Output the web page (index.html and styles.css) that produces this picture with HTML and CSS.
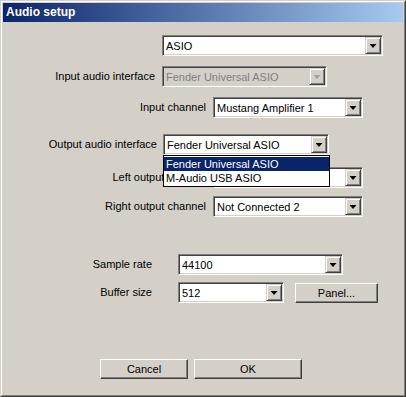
FILE: index.html
```html
<!DOCTYPE html>
<html lang="en">
<head>
    <meta charset="UTF-8">
    <title>Audio setup</title>
    <link rel="stylesheet" href="styles.css">
</head>
<body>

    <div id="window">
        <div id="frame">

            <div id="titlebar">Audio setup</div>

            <div id="content">

                <div class="row row-driver">
                    <div class="combo combo-driver"><span class="value">ASIO</span><span class="arrow"></span></div>
                </div>

                <div class="row row-input-if">
                    <label class="label label-mid">Input audio interface</label>
                    <div class="combo combo-mid disabled"><span class="value">Fender Universal ASIO</span><span class="arrow"></span></div>
                </div>

                <div class="row row-input-ch">
                    <label class="label label-wide">Input channel</label>
                    <div class="combo combo-channel"><span class="value">Mustang Amplifier 1</span><span class="arrow"></span></div>
                </div>

                <div class="row row-output-if">
                    <label class="label label-output">Output audio interface</label>
                    <div class="combo combo-output open">
                        <span class="value">Fender Universal ASIO</span><span class="arrow"></span>
                        <!-- open drop-down list -->
                        <ul class="dropdown">
                            <li class="selected">Fender Universal ASIO</li>
                            <li>M-Audio USB ASIO</li>
                        </ul>
                    </div>
                </div>

                <div class="row row-left">
                    <label class="label label-wide">Left output channel</label>
                    <!-- value is hidden behind the open list -->
                    <div class="combo combo-channel"><span class="value"></span><span class="arrow"></span></div>
                </div>

                <div class="row row-right">
                    <label class="label label-wide">Right output channel</label>
                    <div class="combo combo-channel"><span class="value">Not Connected 2</span><span class="arrow"></span></div>
                </div>

                <div class="row row-rate">
                    <label class="label label-narrow">Sample rate</label>
                    <div class="combo combo-rate"><span class="value">44100</span><span class="arrow"></span></div>
                </div>

                <div class="row row-buffer">
                    <label class="label label-narrow">Buffer size</label>
                    <div class="combo combo-buffer"><span class="value">512</span><span class="arrow"></span></div>
                    <button class="btn btn-panel" type="button">Panel...</button>
                </div>

                <div class="row row-actions">
                    <button class="btn btn-cancel" type="button">Cancel</button>
                    <button class="btn btn-ok" type="button">OK</button>
                </div>

            </div>
        </div>
    </div>

</body>
</html>
```

FILE: styles.css
```css
* {
    margin: 0px;
    padding: 0px;
    box-sizing: border-box;
}
html, body {
    width: 100%;
    height: 100%;
    background: #d4d0c8;
}
body {
    font-family: 'Liberation Sans', Arial, sans-serif;
    font-size: 11px;
    color: #000;
}
ul {
    list-style-type: none;
}

/* window frame */
#window {
    width: 406px;
    height: 397px;
    border: 1px solid;
    border-color: #d4d0c8 #404040 #404040 #d4d0c8;
}
#frame {
    height: 100%;
    border: 1px solid;
    border-color: #fff #808080 #808080 #fff;
    padding: 1px;
    display: flex;
    flex-direction: column;
}
#titlebar {
    height: 19px;
    padding-left: 3px;
    line-height: 19px;
    color: #fff;
    font-weight: bold;
    font-size: 12px;
    background-image: linear-gradient(to right, #0a246a, #a6caf0);
}
#content {
    flex: 1;
    display: flex;
    flex-direction: column;
}

/* rows */
.row {
    display: flex;
    align-items: center;
}
.row-driver {
    margin-top: 13px;
    padding-left: 159px;
}
.row-input-if { margin-top: 10px; }
.row-input-ch { margin-top: 10px; }
.row-output-if { margin-top: 16px; }
.row-left { margin-top: 12px; }
.row-right { margin-top: 8px; }
.row-rate { margin-top: 37px; }
.row-buffer { margin-top: 7px; }
.row-actions {
    margin-top: 56px;
    padding-left: 97px;
    gap: 6px;
}

/* labels */
.label {
    text-align: right;
    white-space: nowrap;
    padding-bottom: 2px;
}
.label-mid {
    width: 152px;
    margin-right: 7px;
}
.label-wide {
    width: 203px;
    margin-right: 7px;
}
.label-output {
    width: 154px;
    margin-right: 6px;
}
.label-narrow {
    width: 149px;
    margin-right: 26px;
}

/* combo boxes */
.combo {
    position: relative;
    display: flex;
    height: 21px;
    padding: 2px;
    background: #fff;
    border: 1px solid;
    border-color: #808080 #fff #fff #808080;
    box-shadow: inset 1px 1px #404040, inset -1px -1px #d4d0c8;
}
.combo .value {
    flex: 1;
    padding-left: 1px;
    line-height: 16px;
    white-space: nowrap;
    overflow: hidden;
}
.combo .arrow {
    width: 16px;
    height: 17px;
    margin: -1px -1px -1px 0px;
    background: #d4d0c8;
    border: 1px solid;
    border-color: #d4d0c8 #404040 #404040 #d4d0c8;
    box-shadow: inset 1px 1px #fff, inset -1px -1px #808080;
    display: flex;
    align-items: center;
    justify-content: center;
}
.combo .arrow::after {
    content: "";
    width: 7px;
    height: 4px;
    margin-top: 1px;
    background: #000;
    clip-path: polygon(0 0, 100% 0, 50% 100%);
}
.combo-driver { width: 221px; }
.combo-mid { width: 165px; }
.combo-channel { width: 150px; }
.combo-output { width: 166px; }
.combo-rate { width: 165px; }
.combo-buffer { width: 106px; }

.combo.disabled {
    background: #d4d0c8;
    color: #808080;
}
.combo.disabled .arrow::after {
    background: #a0a0a0;
}

/* drop-down list of the open combo */
.dropdown {
    position: absolute;
    top: 20px;
    left: -1px;
    width: 167px;
    padding: 1px 0px;
    background: #fff;
    border: 1px solid #000;
    z-index: 2;
}
.dropdown li {
    height: 14px;
    line-height: 14px;
    padding-left: 2px;
}
.dropdown li.selected {
    background: #0a246a;
    color: #fff;
}

/* buttons */
.btn {
    height: 20px;
    font-family: inherit;
    font-size: 11px;
    color: #000;
    background: #d4d0c8;
    border: 1px solid;
    border-color: #fff #404040 #404040 #fff;
    box-shadow: inset -1px -1px #808080;
}
.btn-panel {
    width: 83px;
    margin-left: 11px;
}
.btn-cancel { width: 88px; }
.btn-ok { width: 108px; }
```
